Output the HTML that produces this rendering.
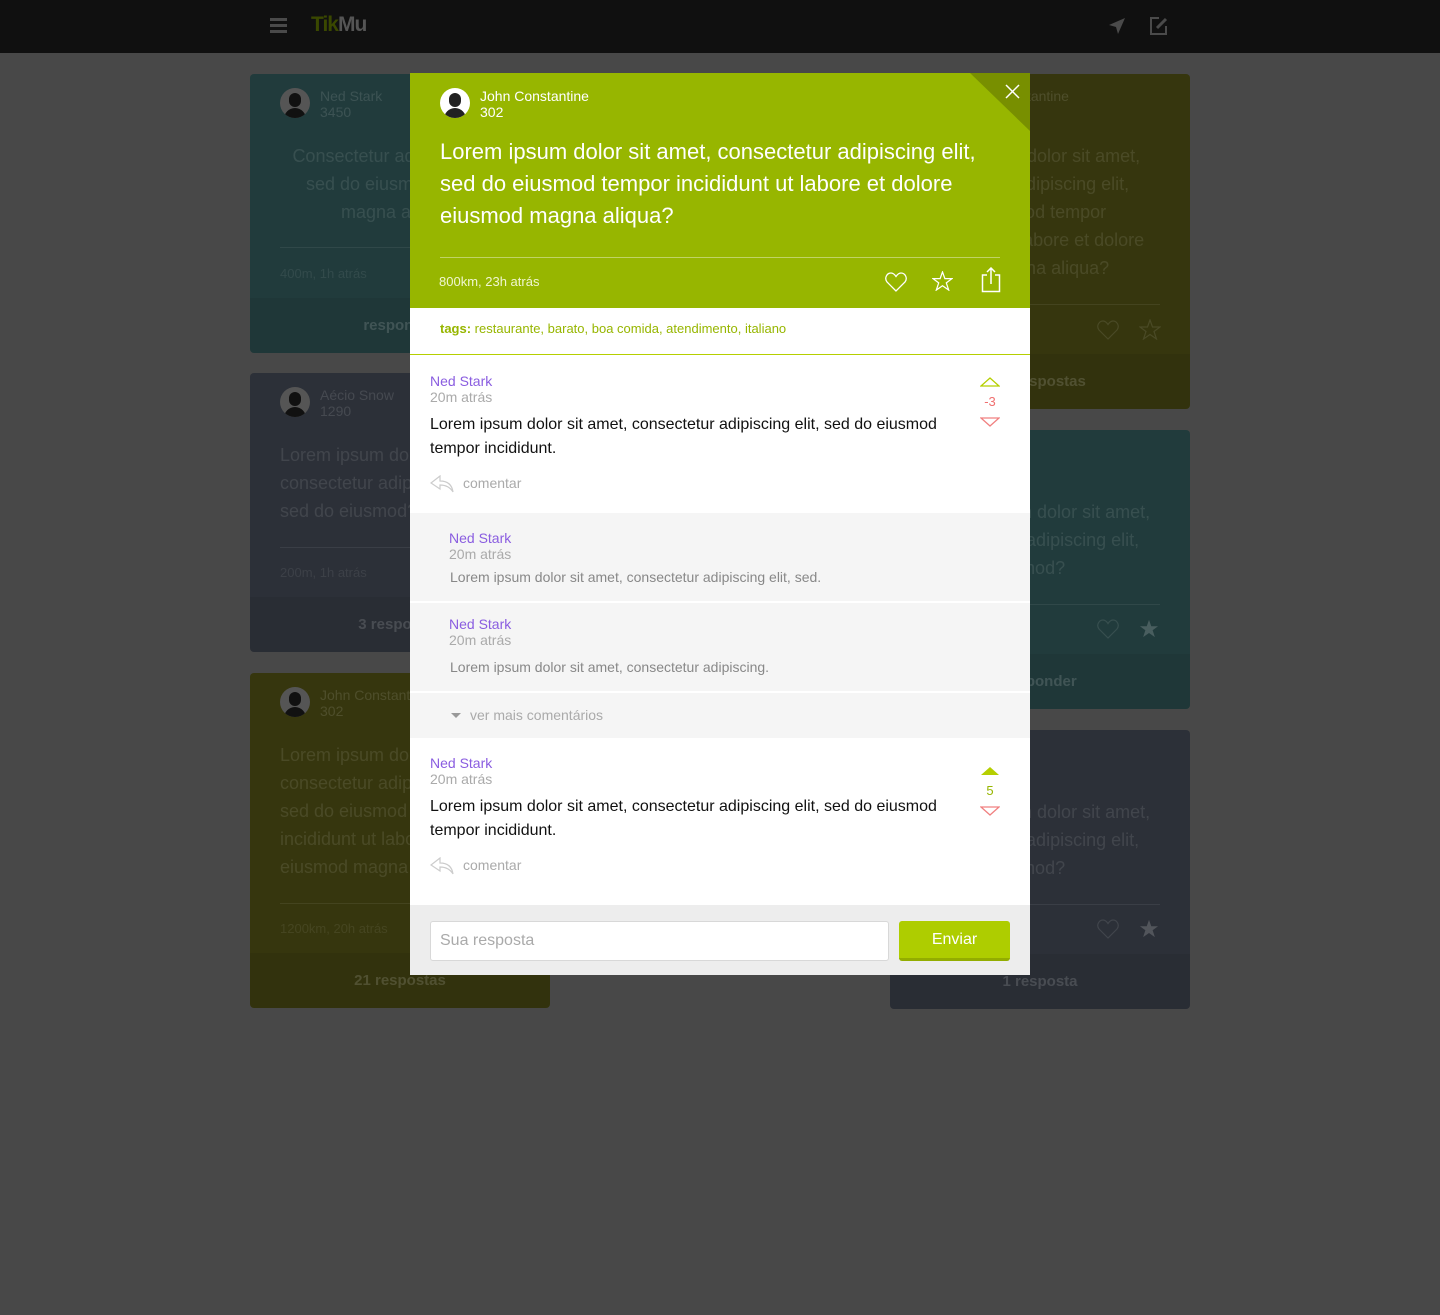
<!DOCTYPE html>
<html><head><meta charset="utf-8">
<style>
*{box-sizing:border-box;margin:0;padding:0}
body{width:1440px;height:1315px;background:#484848;font-family:"Liberation Sans",sans-serif;position:relative;overflow:hidden}
.nav{position:absolute;left:0;top:0;width:1440px;height:53px;background:#101010}
.card{position:absolute;width:300px;border-radius:4px;overflow:hidden}
.card .av{position:absolute;left:30px;top:14px;width:30px;height:30px;border-radius:50%;background:#555;overflow:hidden}
.card .av:before{content:"";position:absolute;left:9px;top:5px;width:12px;height:14px;border-radius:6px;background:#111}
.card .av:after{content:"";position:absolute;left:4px;top:20px;width:22px;height:14px;border-radius:11px 11px 0 0;background:#111}
.card .nm{position:absolute;left:70px;top:14px;font-size:14px;line-height:16px;color:rgba(255,255,255,.12)}
.card .tx{position:absolute;left:30px;font-size:18px;line-height:28px;color:rgba(255,255,255,.1);font-weight:300;white-space:nowrap}
.card .ln{position:absolute;left:30px;right:30px;height:1px;background:rgba(255,255,255,.07)}
.card .mt{position:absolute;left:30px;font-size:13px;color:rgba(255,255,255,.08)}
.card .ft{position:absolute;left:0;right:0;bottom:0;background:rgba(0,0,0,.06);text-align:center;font-size:15px;color:rgba(255,255,255,.15);font-weight:bold}
.teal{background:#213b3c}.slate{background:#2c3038}.olive{background:#36360e}
.modal{position:absolute;left:410px;top:73px;width:620px;height:902px;background:#fff}
.green{position:absolute;left:0;top:0;width:620px;height:235px;background:#97b600;overflow:hidden}
.purple{color:#8a5de0;font-size:14px;line-height:16px}
.time{color:#aaa;font-size:14px;line-height:16px}
.body{color:#111;font-size:16px;line-height:24px}
.com{position:absolute;left:20px;font-size:14px;color:#aaa}
.com svg{vertical-align:middle;margin-right:8px}
</style></head><body>
<div class="nav">
  <div style="position:absolute;left:270px;top:18px;width:17px;height:3px;background:#4a4a4a;box-shadow:0 6px 0 #4a4a4a,0 12px 0 #4a4a4a"></div>
  <div style="position:absolute;left:311px;top:13px;font-size:21px;font-weight:bold;letter-spacing:-1px"><span style="color:#3a4800">Tik</span><span style="color:#555">Mu</span></div>
  <svg style="position:absolute;left:1108px;top:17px" width="18" height="18" viewBox="0 0 18 18"><path d="M17 1 L1 8 L8 10 L10 17 Z" fill="#4a4a4a"/></svg>
  <svg style="position:absolute;left:1149px;top:16px" width="20" height="20" viewBox="0 0 20 20"><path d="M10 2 H2 V18 H17 V10" fill="none" stroke="#4a4a4a" stroke-width="2"/><path d="M8 12 L17 3" stroke="#4a4a4a" stroke-width="3"/></svg>
</div>

<!-- left column -->
<div class="card teal" style="left:250px;top:74px;height:279px">
  <div class="av"></div><div class="nm">Ned Stark<br>3450</div>
  <div class="tx" style="top:68px;left:0;width:300px;text-align:center">Consectetur adipiscing elit,<br>sed do eiusmod tempor<br>magna aliqua?</div>
  <div class="ln" style="top:173px"></div><div class="mt" style="top:192px">400m, 1h atrás</div>
  <div class="ft" style="height:55px;line-height:55px">responder</div>
</div>
<div class="card slate" style="left:250px;top:373px;height:279px">
  <div class="av"></div><div class="nm">Aécio Snow<br>1290</div>
  <div class="tx" style="top:68px">Lorem ipsum dolor sit amet,<br>consectetur adipiscing elit,<br>sed do eiusmod?</div>
  <div class="ln" style="top:174px"></div><div class="mt" style="top:192px">200m, 1h atrás</div>
  <div class="ft" style="height:55px;line-height:55px">3 respostas</div>
</div>
<div class="card olive" style="left:250px;top:673px;height:335px">
  <div class="av"></div><div class="nm">John Constantine<br>302</div>
  <div class="tx" style="top:68px">Lorem ipsum dolor sit amet,<br>consectetur adipiscing elit,<br>sed do eiusmod tempor<br>incididunt ut labore et dolore<br>eiusmod magna aliqua?</div>
  <div class="ln" style="top:230px"></div><div class="mt" style="top:248px">1200km, 20h atrás</div>
  <div class="ft" style="height:55px;line-height:55px">21 respostas</div>
</div>

<!-- right column -->
<div class="card olive" style="left:890px;top:74px;height:335px">
  <div class="nm" style="left:70px">John Constantine</div>
  <div class="tx" style="top:68px;left:28px">Lorem ipsum dolor sit amet,<br>consectetur adipiscing elit,<br>sed do eiusmod tempor<br>incididunt ut labore et dolore<br>eiusmod magna aliqua?</div>
  <div class="ln" style="top:230px"></div><div class="mt" style="top:248px">800km, 23h atrás</div>
  <svg style="position:absolute;left:207px;top:246px" width="22" height="20" viewBox="0 0 22 20"><path d="M11 19 L2 10 C-1 6 2 1 6 1 C8.5 1 10 3 11 4.5 C12 3 13.5 1 16 1 C20 1 23 6 20 10 Z" fill="none" stroke="rgba(255,255,255,.1)" stroke-width="1.2"/></svg>
  <svg style="position:absolute;left:249px;top:245px" width="22" height="21" viewBox="0 0 22 21"><path d="M11 1 L13.5 8 L21 8 L15 12.5 L17.5 20 L11 15.5 L4.5 20 L7 12.5 L1 8 L8.5 8 Z" fill="none" stroke="rgba(255,255,255,.1)" stroke-width="1.2"/></svg>
  <div class="ft" style="height:55px;line-height:55px">21 respostas</div>
</div>
<div class="card teal" style="left:890px;top:430px;height:279px">
  <div class="tx" style="top:68px;left:38px">Lorem ipsum dolor sit amet,<br>consectetur adipiscing elit,<br>sed do eiusmod?</div>
  <div class="ln" style="top:174px"></div>
  <svg style="position:absolute;left:207px;top:189px" width="22" height="20" viewBox="0 0 22 20"><path d="M11 19 L2 10 C-1 6 2 1 6 1 C8.5 1 10 3 11 4.5 C12 3 13.5 1 16 1 C20 1 23 6 20 10 Z" fill="none" stroke="rgba(255,255,255,.1)" stroke-width="1.2"/></svg>
  <svg style="position:absolute;left:249px;top:189px" width="20" height="19" viewBox="0 0 22 21"><path d="M11 1 L13.5 8 L21 8 L15 12.5 L17.5 20 L11 15.5 L4.5 20 L7 12.5 L1 8 L8.5 8 Z" fill="rgba(255,255,255,.18)"/></svg>
  <div class="ft" style="height:55px;line-height:55px">responder</div>
</div>
<div class="card slate" style="left:890px;top:730px;height:279px">
  <div class="tx" style="top:68px;left:38px">Lorem ipsum dolor sit amet,<br>consectetur adipiscing elit,<br>sed do eiusmod?</div>
  <div class="ln" style="top:174px"></div>
  <svg style="position:absolute;left:207px;top:189px" width="22" height="20" viewBox="0 0 22 20"><path d="M11 19 L2 10 C-1 6 2 1 6 1 C8.5 1 10 3 11 4.5 C12 3 13.5 1 16 1 C20 1 23 6 20 10 Z" fill="none" stroke="rgba(255,255,255,.1)" stroke-width="1.2"/></svg>
  <svg style="position:absolute;left:249px;top:189px" width="20" height="19" viewBox="0 0 22 21"><path d="M11 1 L13.5 8 L21 8 L15 12.5 L17.5 20 L11 15.5 L4.5 20 L7 12.5 L1 8 L8.5 8 Z" fill="rgba(255,255,255,.18)"/></svg>
  <div class="ft" style="height:55px;line-height:55px">1 resposta</div>
</div>

<!-- modal -->
<div class="modal">
  <div class="green">
    <div style="position:absolute;right:0;top:0;width:0;height:0;border-top:58px solid #788f00;border-left:60px solid transparent"></div>
    <svg style="position:absolute;left:595px;top:11px" width="15" height="15" viewBox="0 0 15 15"><path d="M1 1 L14 14 M14 1 L1 14" stroke="#fff" stroke-width="1.5"/></svg>
    <div style="position:absolute;left:30px;top:15px;width:30px;height:30px;border-radius:50%;background:#fff;overflow:hidden">
      <div style="position:absolute;left:9px;top:5px;width:12px;height:14px;border-radius:6px;background:#222"></div>
      <div style="position:absolute;left:4px;top:20px;width:22px;height:14px;border-radius:11px 11px 0 0;background:#222"></div>
    </div>
    <div style="position:absolute;left:70px;top:15px;color:#fff;font-size:14px;line-height:16px">John Constantine<br>302</div>
    <div style="position:absolute;left:30px;top:63px;width:570px;color:#fff;font-size:22px;line-height:32px;font-weight:300">Lorem ipsum dolor sit amet, consectetur adipiscing elit, sed do eiusmod tempor incididunt ut labore et dolore eiusmod magna aliqua?</div>
    <div style="position:absolute;left:30px;top:184px;width:560px;height:1px;background:rgba(255,255,255,.4)"></div>
    <div style="position:absolute;left:29px;top:201px;color:#f0f6d0;font-size:13px">800km, 23h atrás</div>
    <svg style="position:absolute;left:475px;top:199px" width="22" height="20" viewBox="0 0 22 20"><path d="M11 19 L2 10 C-1 6 2 1 6 1 C8.5 1 10 3 11 4.5 C12 3 13.5 1 16 1 C20 1 23 6 20 10 Z" fill="none" stroke="#fff" stroke-width="1.3"/></svg>
    <svg style="position:absolute;left:522px;top:198px" width="21" height="20" viewBox="0 0 22 21"><path d="M11 1 L13.5 8 L21 8 L15 12.5 L17.5 20 L11 15.5 L4.5 20 L7 12.5 L1 8 L8.5 8 Z" fill="none" stroke="#fff" stroke-width="1.3"/></svg>
    <svg style="position:absolute;left:571px;top:194px" width="20" height="26" viewBox="0 0 20 26"><path d="M6 8 H1.5 V24.5 H18.5 V8 H14" fill="none" stroke="#fff" stroke-width="1.5"/><path d="M10 17 V1 M6 5 L10 1 L14 5" fill="none" stroke="#fff" stroke-width="1.5"/></svg>
  </div>
  <div style="position:absolute;left:0;top:235px;width:620px;height:47px;border-bottom:1px solid #b5cf00;padding:13px 30px;font-size:13px;color:#97b600"><b>tags:</b> restaurante, barato, boa comida, atendimento, italiano</div>

  <!-- comment 1 -->
  <div style="position:absolute;left:20px;top:300px" class="purple">Ned Stark</div>
  <div style="position:absolute;left:20px;top:316px" class="time">20m atrás</div>
  <div style="position:absolute;left:20px;top:340px;width:540px" class="body">Lorem ipsum dolor sit amet, consectetur adipiscing elit, sed do eiusmod tempor incididunt.</div>
  <svg style="position:absolute;left:570px;top:304px" width="20" height="10" viewBox="0 0 20 10"><path d="M1 9 L10 1 L19 9 Z" fill="none" stroke="#b5cf00" stroke-width="1.3"/></svg>
  <div style="position:absolute;left:570px;top:321px;width:20px;text-align:center;color:#f07070;font-size:13px">-3</div>
  <svg style="position:absolute;left:570px;top:344px" width="20" height="10" viewBox="0 0 20 10"><path d="M1 1 L10 9 L19 1 Z" fill="none" stroke="#f08080" stroke-width="1.3"/></svg>
  <div class="com" style="top:402px"><svg width="25" height="18" viewBox="0 0 25 18"><path d="M10 1 L1 8 L10 14 V10 C16 10 20 12 23 17 C22 10 18 6 10 6 Z" fill="none" stroke="#ccc" stroke-width="1.2"/></svg>comentar</div>

  <!-- replies -->
  <div style="position:absolute;left:0;top:440px;width:620px;height:225px;background:#f5f5f5">
    <div style="position:absolute;left:39px;top:17px" class="purple">Ned Stark</div>
    <div style="position:absolute;left:39px;top:33px" class="time">20m atrás</div>
    <div style="position:absolute;left:40px;top:56px;font-size:14px;color:#888">Lorem ipsum dolor sit amet, consectetur adipiscing elit, sed.</div>
    <div style="position:absolute;left:0;top:88px;width:620px;height:2px;background:#fff"></div>
    <div style="position:absolute;left:39px;top:103px" class="purple">Ned Stark</div>
    <div style="position:absolute;left:39px;top:119px" class="time">20m atrás</div>
    <div style="position:absolute;left:40px;top:146px;font-size:14px;color:#888">Lorem ipsum dolor sit amet, consectetur adipiscing.</div>
    <div style="position:absolute;left:0;top:178px;width:620px;height:2px;background:#fff"></div>
    <div style="position:absolute;left:41px;top:200px;width:0;height:0;border-left:5px solid transparent;border-right:5px solid transparent;border-top:5px solid #999"></div>
    <div style="position:absolute;left:60px;top:194px;font-size:14px;color:#aaa">ver mais comentários</div>
  </div>

  <!-- comment 2 -->
  <div style="position:absolute;left:20px;top:682px" class="purple">Ned Stark</div>
  <div style="position:absolute;left:20px;top:698px" class="time">20m atrás</div>
  <div style="position:absolute;left:20px;top:722px;width:540px" class="body">Lorem ipsum dolor sit amet, consectetur adipiscing elit, sed do eiusmod tempor incididunt.</div>
  <svg style="position:absolute;left:570px;top:693px" width="20" height="10" viewBox="0 0 20 10"><path d="M1 9 L10 1 L19 9 Z" fill="#b5cf00"/></svg>
  <div style="position:absolute;left:570px;top:710px;width:20px;text-align:center;color:#97b600;font-size:13px">5</div>
  <svg style="position:absolute;left:570px;top:733px" width="20" height="10" viewBox="0 0 20 10"><path d="M1 1 L10 9 L19 1 Z" fill="none" stroke="#f08080" stroke-width="1.3"/></svg>
  <div class="com" style="top:784px"><svg width="25" height="18" viewBox="0 0 25 18"><path d="M10 1 L1 8 L10 14 V10 C16 10 20 12 23 17 C22 10 18 6 10 6 Z" fill="none" stroke="#ccc" stroke-width="1.2"/></svg>comentar</div>

  <!-- footer -->
  <div style="position:absolute;left:0;top:832px;width:620px;height:70px;background:#ededed">
    <div style="position:absolute;left:20px;top:16px;width:459px;height:40px;background:#fff;border:1px solid #d8d8d8;border-radius:3px;padding:0 9px;line-height:38px;font-size:16px;color:#aaa">Sua resposta</div>
    <div style="position:absolute;left:489px;top:16px;width:111px;height:40px;background:#aecd00;border-bottom:3px solid #93ad00;border-radius:3px;text-align:center;line-height:37px;font-size:16px;color:#fff">Enviar</div>
  </div>
</div>
</body></html>
